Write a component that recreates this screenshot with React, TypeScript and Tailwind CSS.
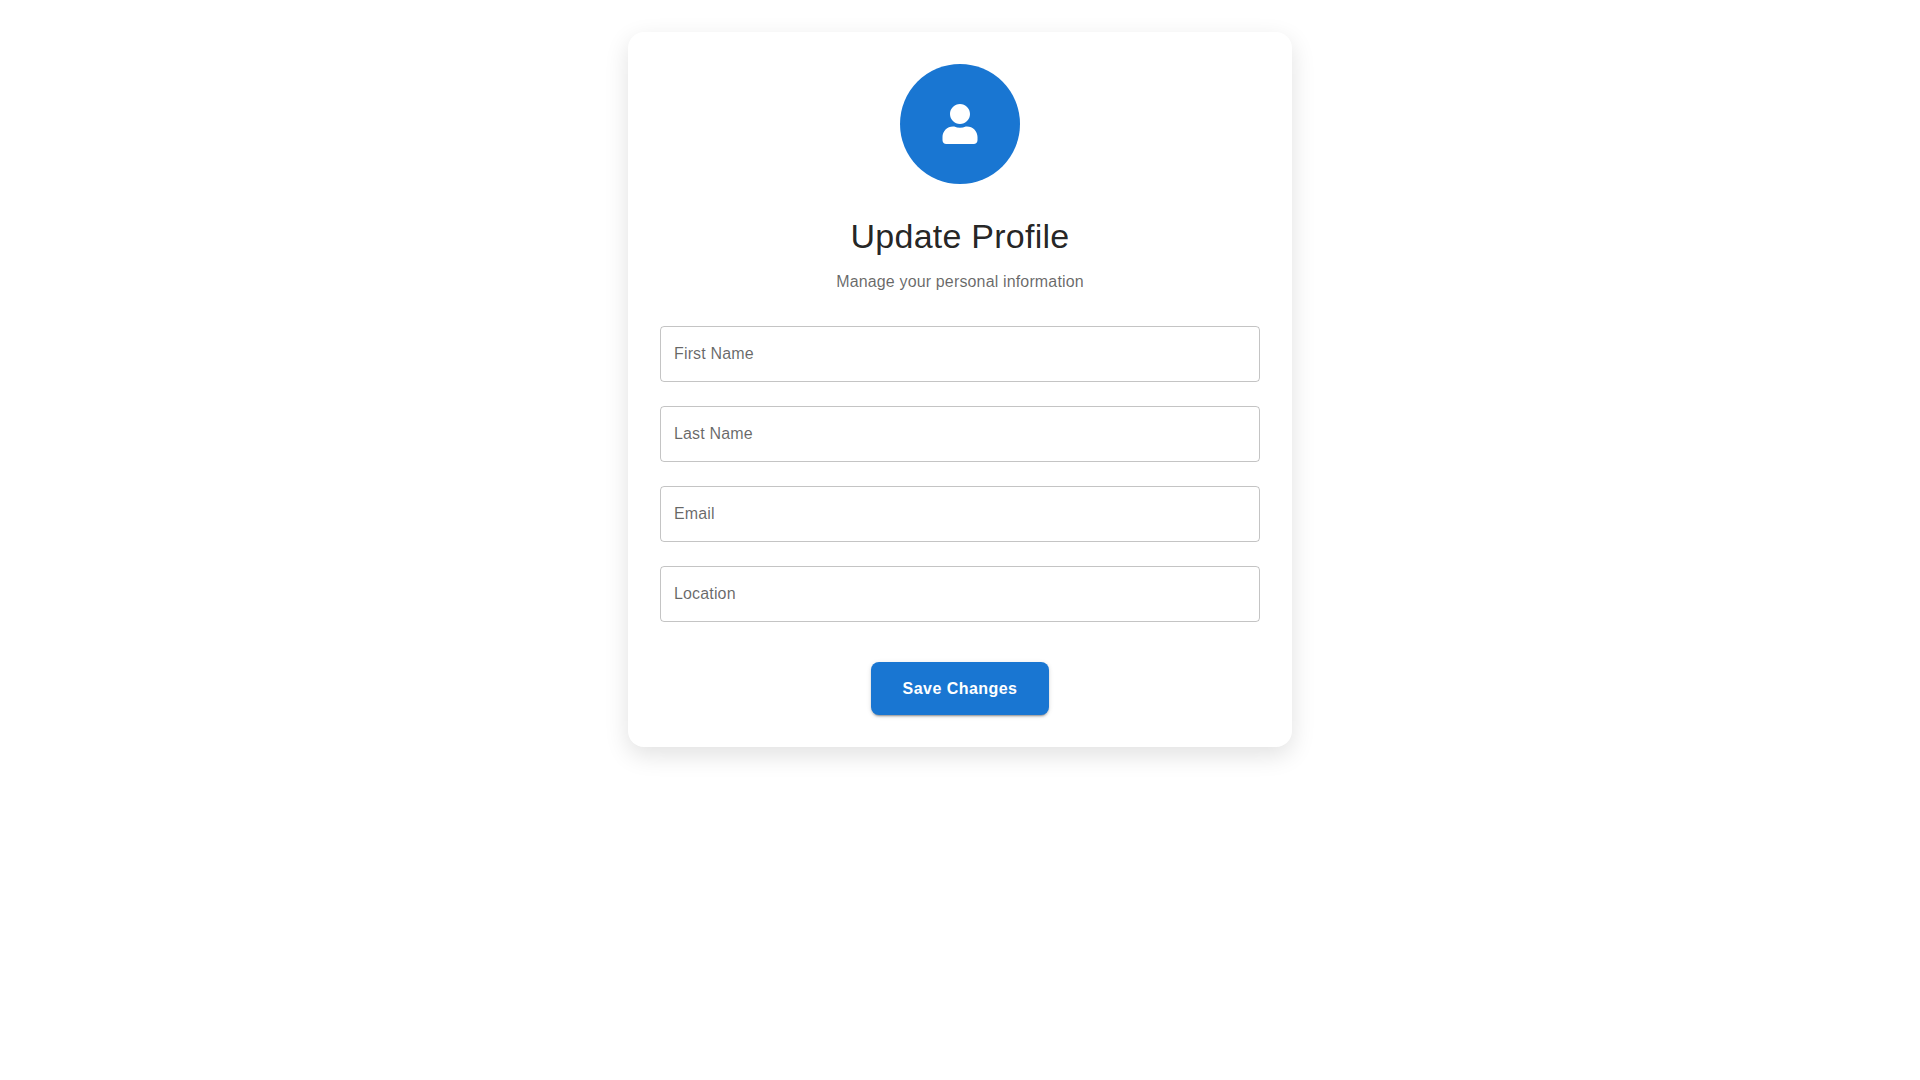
import { FaUser } from "react-icons/fa";

const fields = [
  { id: "firstName", label: "First Name", type: "text" },
  { id: "lastName", label: "Last Name", type: "text" },
  { id: "email", label: "Email", type: "email" },
  { id: "location", label: "Location", type: "text" },
];

export default function App() {
  return (
    <main className="min-h-screen bg-white px-4 py-8 font-['Liberation_Sans',Arial,sans-serif]">
      <section className="mx-auto flex w-full max-w-[664px] flex-col items-center rounded-2xl bg-white p-8 shadow-[0_8px_24px_rgba(0,0,0,0.12)]">
        <div className="flex size-30 items-center justify-center rounded-full bg-[#1976d2] text-white">
          <FaUser size={40} aria-hidden="true" />
        </div>
        <h1 className="mt-8 text-[34px] leading-10 tracking-[0.25px] text-black/87">Update Profile</h1>
        <p className="mt-[14px] text-base leading-6 tracking-[0.15px] text-black/60">Manage your personal information</p>
        <form className="mt-8 flex w-full flex-col items-center gap-6" onSubmit={(e) => e.preventDefault()}>
          {fields.map((field) => (
            <div key={field.id} className="relative w-full">
              <input
                id={field.id}
                type={field.type}
                placeholder=" "
                className="peer block h-14 w-full rounded border border-black/23 px-[13px] text-base tracking-[0.15px] text-black/87 focus:outline-2 focus:outline-[#1976d2]"
              />
              {/* Floating label: rests inside the empty box, moves onto its border when focused or filled */}
              <label
                htmlFor={field.id}
                className="pointer-events-none absolute -top-3 left-[14px] bg-white text-xs leading-6 tracking-[0.15px] text-black/60 peer-placeholder-shown:top-4 peer-placeholder-shown:text-base peer-placeholder-shown:leading-6 peer-focus:-top-3 peer-focus:text-xs peer-focus:text-[#1976d2]"
              >
                {field.label}
              </label>
            </div>
          ))}
          <button
            type="submit"
            className="mt-4 rounded-lg bg-[#1976d2] px-8 py-3 text-base leading-[29px] font-semibold tracking-[0.46px] text-white shadow-[0_3px_1px_-2px_rgba(0,0,0,0.2),0_2px_2px_0_rgba(0,0,0,0.14),0_1px_5px_0_rgba(0,0,0,0.12)]"
          >
            Save Changes
          </button>
        </form>
      </section>
    </main>
  );
}
